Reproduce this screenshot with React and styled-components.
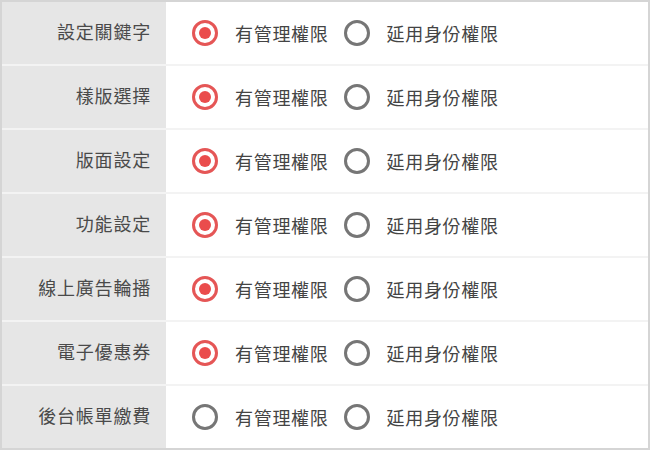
import React from "react";
import styled, { createGlobalStyle } from "styled-components";

const Global = createGlobalStyle`
  html, body { margin: 0; padding: 0; background: #ffffff; }
  body { width: 650px; height: 450px; overflow: hidden; }
  * { box-sizing: border-box; }
`;

const Panel = styled.div`
  width: 650px;
  height: 450px;
  border: 2px solid #d5d5d5;
  background: #ffffff;
  display: flex;
  flex-direction: column;
  font-family: "Noto Sans CJK TC", "Noto Sans", sans-serif;
  color: #444;
`;

const Row = styled.div`
  display: grid;
  grid-template-columns: 164px 1fr;
  height: 64px;
  border-bottom: 2px solid #f3f3f3;
  &:last-child {
    height: 62px;
    border-bottom: none;
  }
`;

const Label = styled.div`
  background: #e6e6e6;
  display: flex;
  align-items: center;
  justify-content: flex-end;
  padding-right: 15px;
  padding-bottom: 4px;
  font-size: 18px;
  letter-spacing: 0.8px;
  color: #4a4a4a;
`;

const Options = styled.div`
  display: flex;
  align-items: center;
  padding-left: 26px;
`;

const Option = styled.label`
  display: flex;
  align-items: center;
  gap: 17px;
  margin-right: 15px;
  font-size: 18px;
  letter-spacing: 0.7px;
  color: #444;
`;

const Radio = styled.span`
  width: 26px;
  height: 26px;
  border-radius: 50%;
  border: 3px solid ${(p) => (p.$checked ? "#e55656" : "#767676")};
  display: flex;
  align-items: center;
  justify-content: center;
  &::after {
    content: "";
    width: 12px;
    height: 12px;
    border-radius: 50%;
    background: ${(p) => (p.$checked ? "#ea4c4c" : "transparent")};
  }
`;

const rows = [
  { label: "設定關鍵字", checked: true },
  { label: "樣版選擇", checked: true },
  { label: "版面設定", checked: true },
  { label: "功能設定", checked: true },
  { label: "線上廣告輪播", checked: true },
  { label: "電子優惠券", checked: true },
  { label: "後台帳單繳費", checked: false },
];

export default function App() {
  return (
    <>
      <Global />
      <Panel>
        {rows.map((r) => (
          <Row key={r.label}>
            <Label>{r.label}</Label>
            <Options>
              <Option>
                <Radio $checked={r.checked} />
                有管理權限
              </Option>
              <Option>
                <Radio $checked={false} />
                延用身份權限
              </Option>
            </Options>
          </Row>
        ))}
      </Panel>
    </>
  );
}
